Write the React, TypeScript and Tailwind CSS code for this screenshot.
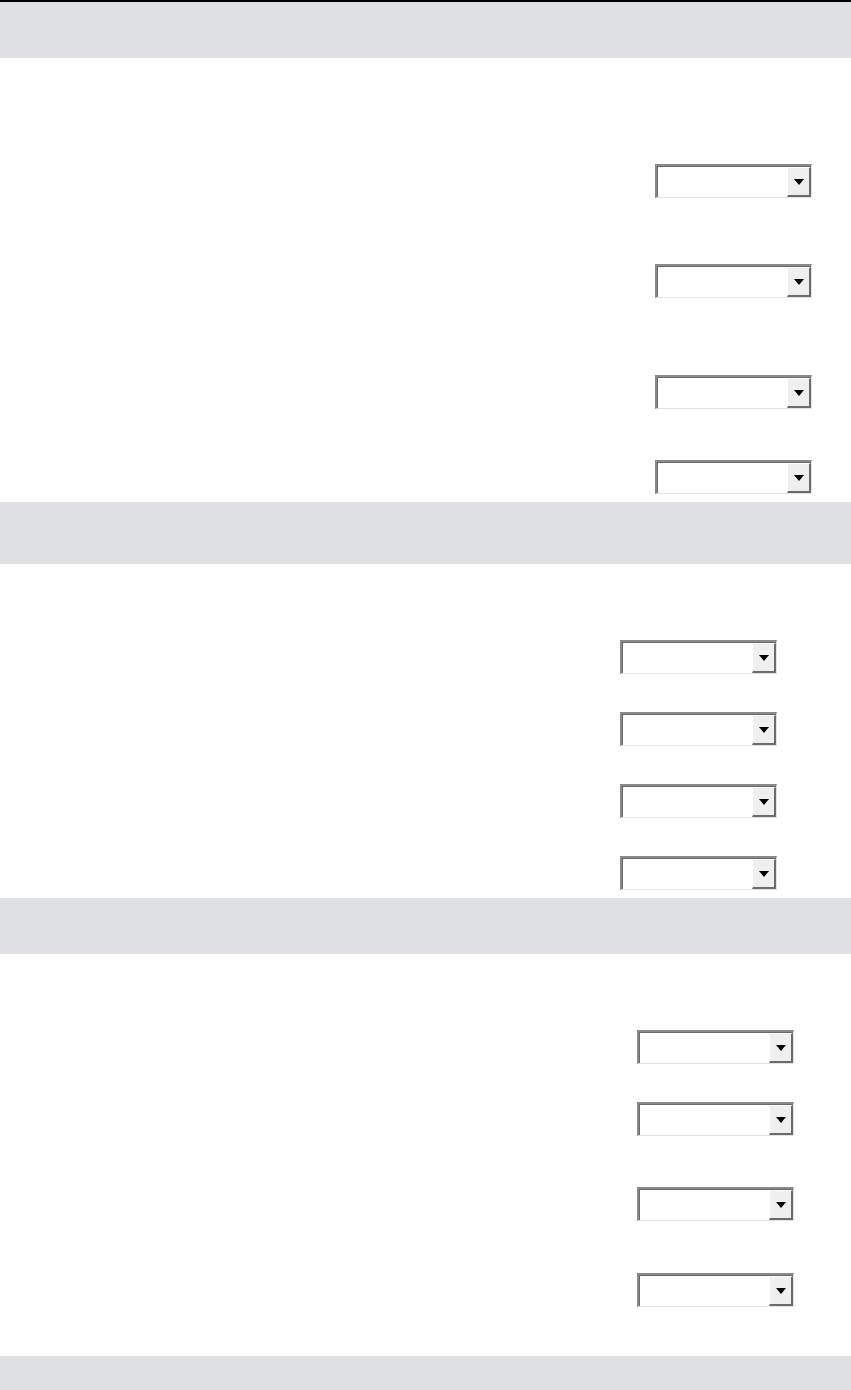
import React from 'react';

const SelectBox: React.FC = () => (
  <div className="flex h-[34px] w-[157px] border-t-2 border-l-2 border-b border-r border-t-[#8a8a8a] border-l-[#8a8a8a] border-b-[#e3e3e3] border-r-[#e3e3e3] bg-white">
    <div className="flex flex-1 border-t border-l border-[#6a6a6a]">
      <div className="flex-1 bg-white" />
      <div className="flex w-[24px] items-center justify-center border-t border-l border-t-white border-l-white border-r-2 border-b-2 border-r-[#6b6b6b] border-b-[#6b6b6b] bg-[#efefef]">
        <div className="h-0 w-0 border-l-[5px] border-r-[5px] border-t-[6px] border-l-transparent border-r-transparent border-t-black" />
      </div>
    </div>
  </div>
);

const Row: React.FC<{ mt: string; pr: string }> = ({ mt, pr }) => (
  <div className={`flex justify-end ${mt} ${pr}`}>
    <SelectBox />
  </div>
);

export default function App() {
  return (
    <div className="min-h-[1390px] w-full bg-white border-t-2 border-black font-['Liberation_Sans',sans-serif]">
      <div className="h-[56px] w-full bg-[#dee0e4]" />
      <Row mt="mt-[106px]" pr="pr-[39px]" />
      <Row mt="mt-[66px]" pr="pr-[39px]" />
      <Row mt="mt-[77px]" pr="pr-[39px]" />
      <Row mt="mt-[51px]" pr="pr-[39px]" />
      <div className="mt-[8px] h-[62px] w-full bg-[#dee0e4]" />
      <Row mt="mt-[76px]" pr="pr-[74px]" />
      <Row mt="mt-[38px]" pr="pr-[74px]" />
      <Row mt="mt-[38px]" pr="pr-[74px]" />
      <Row mt="mt-[38px]" pr="pr-[74px]" />
      <div className="mt-[8px] h-[56px] w-full bg-[#dee0e4]" />
      <Row mt="mt-[76px]" pr="pr-[57px]" />
      <Row mt="mt-[38px]" pr="pr-[57px]" />
      <Row mt="mt-[51px]" pr="pr-[57px]" />
      <Row mt="mt-[52px]" pr="pr-[57px]" />
      <div className="mt-[49px] h-[40px] w-full bg-[#dee0e4]" />
    </div>
  );
}
